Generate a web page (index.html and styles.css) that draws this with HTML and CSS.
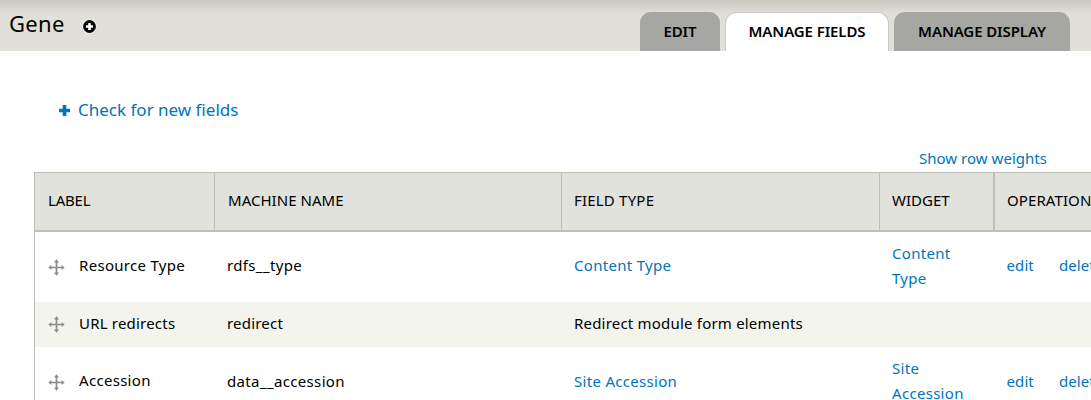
FILE: index.html
```html
<!DOCTYPE html>
<html lang="en">
<head>
<meta charset="utf-8">
<title>Gene</title>
<link rel="stylesheet" href="styles.css">
</head>
<body>
<svg width="0" height="0" class="defs">
  <symbol id="move" viewBox="0 0 17 17">
    <path d="M8.5 2v13M2 8.5h13" stroke="#8c8c8c" stroke-width="1.7" fill="none"/>
    <path d="M8.5 .3 11.1 3.4H5.9zM8.5 16.7 5.9 13.6h5.2zM.3 8.5 3.4 5.9v5.2zM16.7 8.5l-3.1 2.6V5.9z" fill="#8c8c8c"/>
  </symbol>
</svg>
<header class="branding">
  <h1 class="title">Gene</h1>
  <svg class="shortcut" width="15" height="15" viewBox="0 0 15 15"><circle cx="7.5" cy="7.5" r="7.4" fill="#f0f0ec"/><circle cx="7.5" cy="7.5" r="6.4" fill="#050505"/><path d="M7.5 4v7M4 7.5h7" stroke="#fff" stroke-width="2.6"/></svg>
  <nav class="tabs">
    <a class="tab tab-edit"><span>EDIT</span></a>
    <a class="tab tab-fields active"><span>MANAGE FIELDS</span></a>
    <a class="tab tab-display"><span>MANAGE DISPLAY</span></a>
  </nav>
</header>
<main>
  <a class="action"><svg width="11" height="11" viewBox="0 0 11 11"><path d="M5.5 0v11M0 5.5h11" stroke="#0074bd" stroke-width="3.6"/></svg><span>Check for new fields</span></a>
  <div class="weights"><a>Show row weights</a></div>
  <div class="table">
    <div class="row head">
      <div class="cell first"><span>LABEL</span></div><div class="cell machine"><span>MACHINE NAME</span></div><div class="cell fieldtype"><span>FIELD TYPE</span></div><div class="cell thick"><span>WIDGET</span></div><div class="cell last"><span>OPERATIONS</span></div>
    </div>
    <div class="row">
      <div class="cell label"><svg class="handle"><use href="#move"/></svg><span>Resource Type</span></div><div class="cell name"><span>rdfs__type</span></div><div class="cell type"><a>Content Type</a></div><div class="cell widget"><a>Content<br>Type</a></div><div class="cell ops"><a>edit</a><a>delete</a></div>
    </div>
    <div class="row even">
      <div class="cell label"><svg class="handle"><use href="#move"/></svg><span>URL redirects</span></div><div class="cell"><span>redirect</span></div><div class="cell"><span>Redirect module form elements</span></div><div class="cell"></div><div class="cell"></div>
    </div>
    <div class="row third">
      <div class="cell label"><svg class="handle"><use href="#move"/></svg><span>Accession</span></div><div class="cell name"><span>data__accession</span></div><div class="cell type"><a>Site Accession</a></div><div class="cell widget"><a>Site<br>Accession</a></div><div class="cell ops"><a>edit</a><a>delete</a></div>
    </div>
  </div>
</main>
</body>
</html>
```
FILE: styles.css
```css
* { box-sizing: border-box; }
html, body { margin: 0; height: 400px; overflow: hidden; }
body { background: #fff; color: #000; font: 15px/25px "Lucida Grande", "Noto Sans", sans-serif; letter-spacing: .2px; }
.defs { display: none; }
a { color: #0074bd; text-decoration: none; }
.branding { height: 51px; display: flex; padding: 0 21px 0 9px; background: linear-gradient(#c9c9c1 0, #e0e0d8 14px); }
.title { width: 73px; margin: 8px 0 0; font-size: 22px; line-height: 30px; font-weight: 400; letter-spacing: .3px; }
.shortcut { margin: 19px 0 0; }
.tabs { display: flex; gap: 5px; margin: 12px 0 0 auto; height: 39px; }
.tab { display: flex; justify-content: center; padding-top: 7px; background: #a6a7a2; color: #000; border-radius: 11px 11px 0 0; font-weight: 600; letter-spacing: -.1px; }
.tab-edit { width: 80px; }
.tab-fields { width: 164px; }
.tab-display { width: 176px; }
.tab.active { background: #fff; border: 1px solid #c9cac3; border-bottom: 0; padding-top: 6px; }
main { padding-left: 34px; overflow: hidden; }
.action { display: flex; align-items: center; gap: 8px; margin: 47px 0 0 25px; height: 25px; font-size: 17px; letter-spacing: 0; }
.action span { padding-bottom: 2px; }
.weights { margin: 23px 44px 1px 0; text-align: right; letter-spacing: .03px; }
.table { width: 1120px; border-left: 1px solid #bebfb9; }
.row { display: grid; grid-template-columns: 180px 347px 318px 115px 1fr; height: 70px; }
.cell { display: flex; align-items: center; padding: 0 12px; white-space: nowrap; }
.cell span, .cell a { padding-bottom: 2px; }
.head { height: 60px; background: #e1e2dc; border-top: 1px solid #bebfb9; border-bottom: 2px solid #bebfb9; letter-spacing: -.2px; }
.head .cell { padding-left: 12px; border-right: 1px solid #bebfb9; }
.head .thick { border-right-width: 2px; letter-spacing: 0; }
.head .first, .head .machine { padding-left: 13px; }
.head .machine { letter-spacing: .03px; }
.head .fieldtype { letter-spacing: .2px; }
.head .last { letter-spacing: .1px; }
.even { height: 45px; background: #f3f4ee; }
.label { padding-left: 13px; gap: 14px; letter-spacing: .3px; }
.even .label { letter-spacing: .2px; }
.row .label span, .row .name span, .row .type a, .row .ops a { padding-bottom: 3px; }
.name { letter-spacing: .35px; }
.type, .widget { letter-spacing: .3px; }
.third .label span { padding-bottom: 4px; }
.third .name span, .third .type a, .third .ops a { padding-bottom: 1px; }
.even .label span { padding-bottom: 2px; }
.handle { width: 17px; height: 17px; flex: none; }
.ops { gap: 25px; padding-left: 11.5px; letter-spacing: .1px; }
```
